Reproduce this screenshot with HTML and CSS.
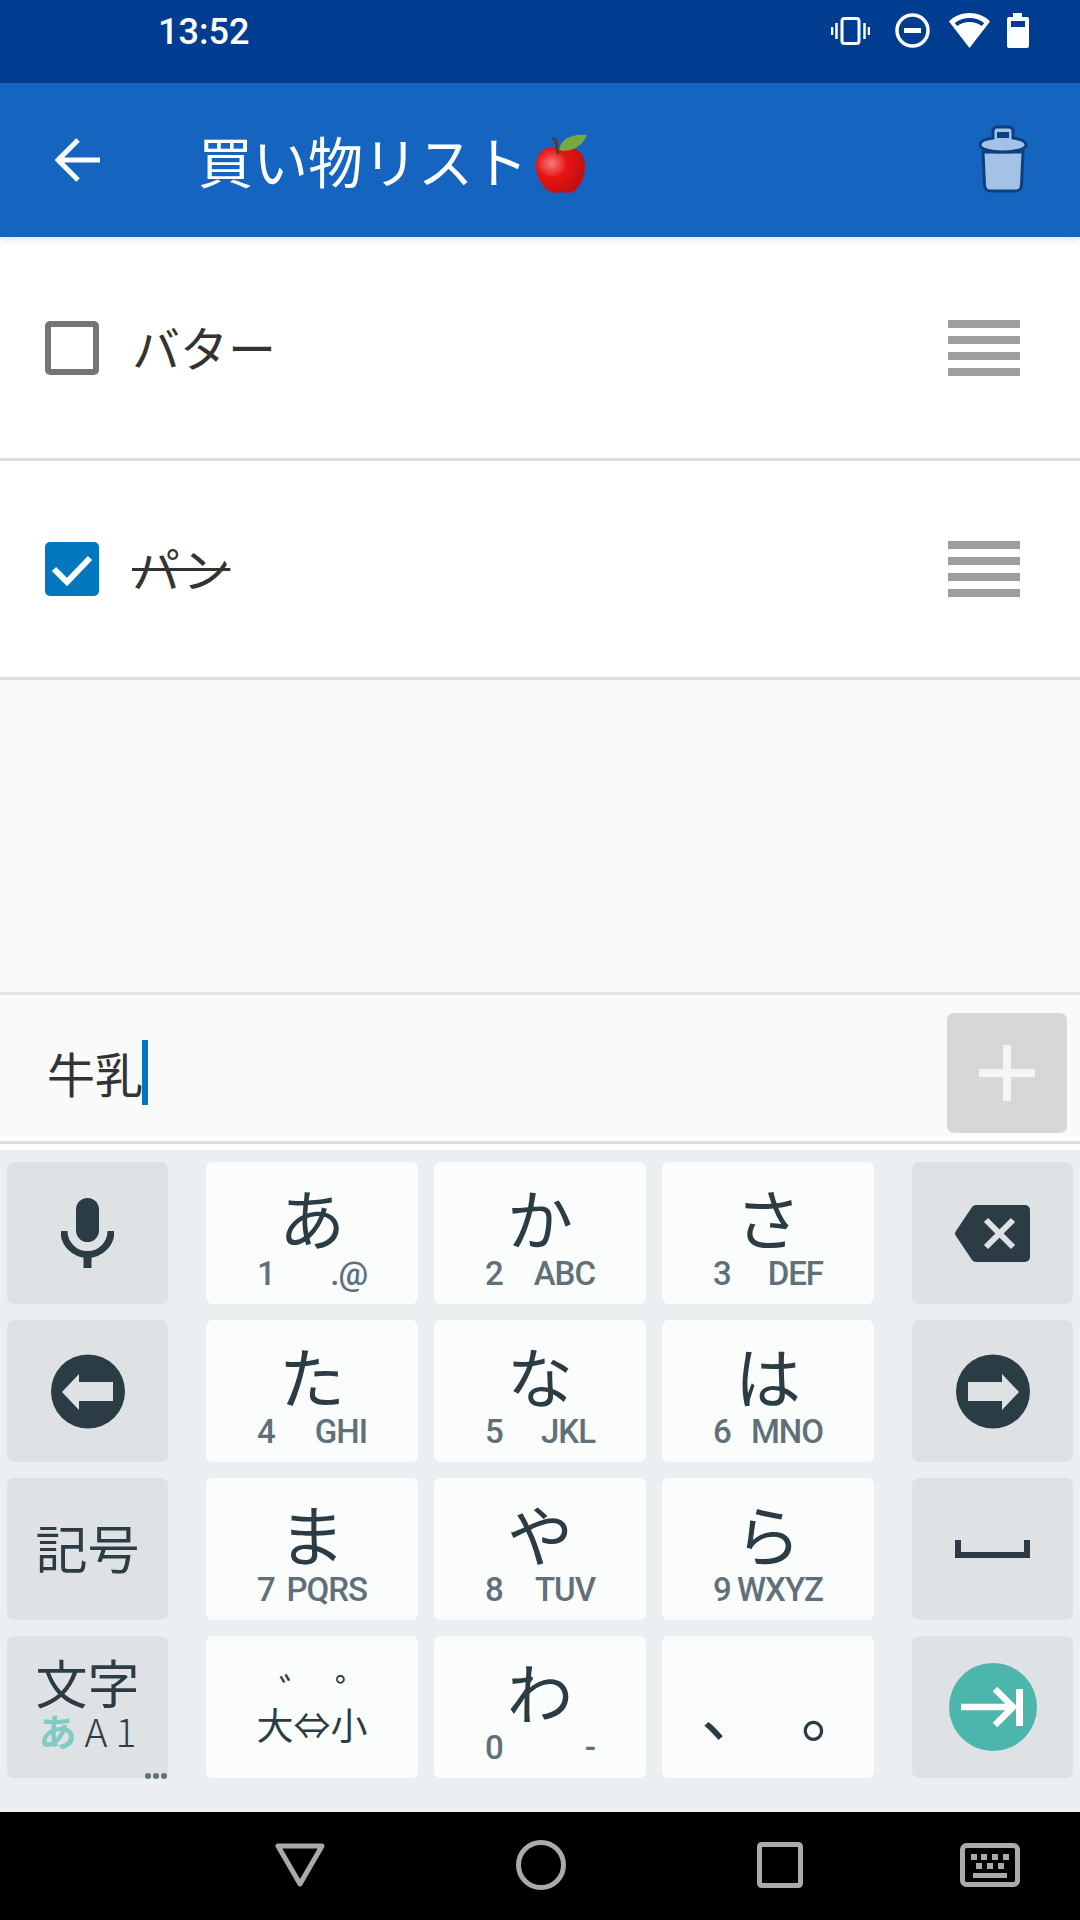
FILE: index.html
```html
<!DOCTYPE html>
<html lang="ja">
<head>
    <meta charset="UTF-8">
    <meta name="viewport" content="width=device-width, initial-scale=1.0">
    <title>買い物リスト</title>
    <link rel="stylesheet" href="styles.css">
</head>
<body>
    <div class="screen">
        <div class="status-bar">
            <span class="clock">13:52</span>
            <div class="status-icons">
                <svg width="39" height="28" viewBox="0 0 39 28"><rect x="11" y="1.500" width="17" height="25" rx="2.500" fill="none" stroke="#fff" stroke-width="3"/><path d="M5.500 6v16M1 10v8M33.500 6v16M38 10v8" stroke="#fff" stroke-width="2.500"/></svg>
                <svg width="35" height="35" viewBox="0 0 35 35"><circle cx="17.500" cy="17.500" r="15.500" fill="none" stroke="#fff" stroke-width="3.500"/><rect x="9" y="15" width="17" height="5" fill="#fff"/></svg>
                <svg width="41" height="35" viewBox="0 0 41 35"><path d="M0 8.500C5 3 12.500 0 20.500 0S36 3 41 8.500L20.500 35z" fill="#fff"/><path d="M7 11.500C11 8.500 15.500 7 20.500 7S30 8.500 34 11.500" fill="none" stroke="#003c8f" stroke-width="4"/></svg>
                <svg width="22" height="35" viewBox="0 0 22 35"><path d="M6 0h9v4h5a2 2 0 0 1 2 2v27a2 2 0 0 1-2 2H2a2 2 0 0 1-2-2V6a2 2 0 0 1 2-2h4z" fill="#fff"/><rect x="4" y="8" width="14" height="6" fill="#003c8f"/></svg>
            </div>
        </div>

        <div class="app-bar">
            <svg class="back-arrow" width="45" height="44" viewBox="0 0 45 44"><path d="M45 22H4M23 2L3 22l20 20" fill="none" stroke="#fff" stroke-width="5"/></svg>
            <h1 class="title">買い物リスト</h1>
            <svg class="apple" width="52" height="60" viewBox="0 0 52 60">
                <defs><radialGradient id="appleFill" cx="0.32" cy="0.35" r="0.7"><stop offset="0" stop-color="#f77a7a"/><stop offset="0.45" stop-color="#e81414"/><stop offset="1" stop-color="#c01010"/></radialGradient></defs>
                <path d="M18 15C8 13 0 20 0 33c0 14 10 27 20 27 3 0 4-1 6-1s3 1 6 1c9 0 17-13 17-27 0-13-9-20-18-18-5 1-8 1-13 0z" fill="url(#appleFill)"/>
                <path d="M22 21L20 8l-3-3" fill="none" stroke="#5d3a1a" stroke-width="3"/>
                <path d="M23 17C24 7 35 0 51 2 47 13 35 20 23 17z" fill="#76a843"/>
            </svg>
            <svg class="trash" width="50" height="68" viewBox="0 0 50 68">
                <path d="M5 27h40l-1.500 33c-.2 4-3 6-6 6h-25c-3 0-5.800-2-6-6z" fill="#a3c2e6" stroke="#0d3f80" stroke-width="3"/>
                <path d="M15 13V6a4 4 0 0 1 4-4h12a4 4 0 0 1 4 4v7c8 1 13 3 13 7s-10 7-23 7-23-3-23-7 5-6 13-7z" fill="#a3c2e6" stroke="#0d3f80" stroke-width="3"/>
                <rect x="19" y="7" width="12" height="6" fill="#0d3f80"/>
            </svg>
        </div>

        <div class="list">
            <div class="row">
                <span class="checkbox"></span>
                <span class="item-name">バター</span>
                <div class="handle"><i></i><i></i><i></i><i></i></div>
            </div>
            <div class="row">
                <span class="checkbox checked">
                    <svg width="54" height="54" viewBox="0 0 54 54"><path d="M9 27l13 13 23-24" fill="none" stroke="#fff" stroke-width="6"/></svg>
                </span>
                <span class="item-name done">パン</span>
                <div class="handle"><i></i><i></i><i></i><i></i></div>
            </div>
        </div>

        <div class="input-bar">
            <div class="input-text">牛乳<span class="cursor"></span></div>
            <div class="add-btn"><span class="plus"></span></div>
        </div>

        <div class="keyboard">
            <div class="key-col">
                <div class="key fn">
                    <svg width="53" height="70" viewBox="0 0 53 70"><rect x="15" y="0" width="23" height="44" rx="11.500" fill="#2b3c44"/><path d="M3 33a23.500 23.500 0 0 0 47 0" fill="none" stroke="#2b3c44" stroke-width="7"/><rect x="22.500" y="54" width="8" height="16" fill="#2b3c44"/></svg>
                </div>
                <div class="key fn">
                    <svg width="74" height="75" viewBox="0 0 74 75"><circle cx="37" cy="37.500" r="37" fill="#2b3c44"/><path d="M11 38l17-18v8h34v19H28v9z" fill="#dfe2e5"/></svg>
                </div>
                <div class="key fn fn-text">記号</div>
                <div class="key fn mode-key">
                    <span class="mode-main">文字</span>
                    <span class="mode-sub"><b>あ</b><span>A</span><span>1</span></span>
                    <span class="more-dots"><i></i><i></i><i></i></span>
                </div>
            </div>

            <div class="key-grid">
                <div class="key"><span class="kana">あ</span><span class="sub"><span>1</span><span>.@</span></span></div>
                <div class="key"><span class="kana">か</span><span class="sub"><span>2</span><span>ABC</span></span></div>
                <div class="key"><span class="kana">さ</span><span class="sub"><span>3</span><span>DEF</span></span></div>
                <div class="key"><span class="kana">た</span><span class="sub"><span>4</span><span>GHI</span></span></div>
                <div class="key"><span class="kana">な</span><span class="sub"><span>5</span><span>JKL</span></span></div>
                <div class="key"><span class="kana">は</span><span class="sub"><span>6</span><span>MNO</span></span></div>
                <div class="key"><span class="kana">ま</span><span class="sub"><span>7</span><span>PQRS</span></span></div>
                <div class="key"><span class="kana">や</span><span class="sub"><span>8</span><span>TUV</span></span></div>
                <div class="key"><span class="kana">ら</span><span class="sub"><span>9</span><span>WXYZ</span></span></div>
                <div class="key small-key">
                    <span class="marks"><span>゛</span><span>゜</span></span>
                    <span class="size-swap">大⇔小</span>
                </div>
                <div class="key"><span class="kana">わ</span><span class="sub"><span>0</span><span>-</span></span></div>
                <div class="key punct-key"><span>、</span><span>。</span></div>
            </div>

            <div class="key-col">
                <div class="key fn">
                    <svg width="75" height="57" viewBox="0 0 75 57"><path d="M21 0h49a5 5 0 0 1 5 5v47a5 5 0 0 1-5 5H21a5 5 0 0 1-4-2L1 31a4 4 0 0 1 0-5L17 2a5 5 0 0 1 4-2z" fill="#2b3c44"/><path d="M31 15l27 27M58 15L31 42" stroke="#dfe2e5" stroke-width="6"/></svg>
                </div>
                <div class="key fn">
                    <svg width="74" height="75" viewBox="0 0 74 75"><circle cx="37" cy="37.500" r="37" fill="#2b3c44"/><path d="M63 38L46 20v8H12v19h34v9z" fill="#dfe2e5"/></svg>
                </div>
                <div class="key fn">
                    <svg width="75" height="18" viewBox="0 0 75 18"><path d="M3 0v15h69V0" fill="none" stroke="#2b3c44" stroke-width="6"/></svg>
                </div>
                <div class="key fn">
                    <svg width="88" height="88" viewBox="0 0 88 88"><circle cx="44" cy="44" r="44" fill="#4db6ac"/><path d="M12 44h50M46 26l18 18-18 18" fill="none" stroke="#fff" stroke-width="6.500"/><rect x="67" y="26" width="7" height="37" fill="#fff"/></svg>
                </div>
            </div>
        </div>

        <div class="nav-bar">
            <svg width="50" height="44" viewBox="0 0 50 44"><path d="M3 3h44L25 41z" fill="none" stroke="#aaa" stroke-width="5" stroke-linejoin="round"/></svg>
            <svg width="50" height="50" viewBox="0 0 50 50"><circle cx="25" cy="25" r="22.500" fill="none" stroke="#aaa" stroke-width="5"/></svg>
            <svg width="46" height="46" viewBox="0 0 46 46"><rect x="2.500" y="2.500" width="41" height="41" rx="2" fill="none" stroke="#aaa" stroke-width="5"/></svg>
            <svg class="nav-keyboard" width="60" height="44" viewBox="0 0 60 44"><rect x="2.500" y="2.500" width="55" height="39" rx="4" fill="none" stroke="#aaa" stroke-width="5"/><path d="M11 11h6v6h-6zM21 11h6v6h-6zM32 11h6v6h-6zM43 11h6v6h-6zM16 20h6v6h-6zM27 20h6v6h-6zM38 20h6v6h-6zM13 30h34v5H13z" fill="#aaa"/></svg>
        </div>
    </div>
</body>
</html>
```

FILE: styles.css
```css
* { box-sizing: border-box; margin: 0; padding: 0; }
body {
    font-family: "Noto Sans CJK JP", "Noto Sans", sans-serif;
    background: #fafafa;
}
.screen {
    width: 1080px;
    height: 1920px;
    display: flex;
    flex-direction: column;
    overflow: hidden;
}

/* status bar */
.status-bar {
    height: 83px;
    flex-shrink: 0;
    background: #003c8f;
    display: flex;
    align-items: flex-start;
    justify-content: space-between;
    padding: 12px 51px 0 158px;
}
.clock {
    font-family: Roboto, sans-serif;
    font-weight: 500;
    font-size: 36px;
    line-height: 40px;
    color: #fff;
}
.status-icons {
    display: flex;
    align-items: center;
    gap: 19px;
    margin-top: 1px;
}
.status-icons svg:first-child { margin-right: 6px; }
.status-icons svg:last-child { margin-left: -2px; }

/* app bar */
.app-bar {
    height: 154px;
    flex-shrink: 0;
    background: #1565c0;
    display: flex;
    align-items: center;
    padding: 0 52px 0 55px;
    position: relative;
    z-index: 1;
    box-shadow: 0 2px 8px rgba(0,0,0,0.12);
}
.back-arrow { flex-shrink: 0; }
.title {
    margin: -2px 0 0 98px;
    font-size: 55px;
    font-weight: 400;
    color: #fff;
    line-height: 60px;
}
.apple { margin: 6px 0 0 8px; }
.trash { margin: -2px 0 0 auto; }

/* list */
.list { flex: 1; background: #fafafa; }
.row {
    height: 219px;
    background: #fff;
    border-bottom: 3px solid #dddddd;
    display: flex;
    align-items: center;
    padding: 0 60px 0 45px;
}
.row:first-child { height: 224px; }
.checkbox {
    width: 54px;
    height: 54px;
    flex-shrink: 0;
    border: 6px solid #757575;
    border-radius: 5px;
}
.checkbox.checked {
    border: none;
    background: #0277bd;
}
.checkbox svg { display: block; }
.item-name {
    margin: 0 0 4px 33px;
    font-size: 48px;
    line-height: 60px;
    color: #333;
}
.item-name.done { text-decoration: line-through; text-decoration-thickness: 3px; }
.handle {
    margin-left: auto;
    width: 72px;
    display: flex;
    flex-direction: column;
    gap: 8px;
}
.handle i { display: block; height: 8px; background: #9e9e9e; }

/* input */
.input-bar {
    height: 158px;
    flex-shrink: 0;
    background: linear-gradient(#fafafa 142px, #fff 142px);
    border-top: 3px solid #e5e5e5;
    display: flex;
    padding: 18px 13px 0 47px;
    position: relative;
}
.input-text {
    flex: 1;
    font-size: 48px;
    line-height: 65px;
    margin-top: 27px;
    color: #333;
    display: flex;
    align-items: center;
    height: 65px;
}
.cursor {
    display: inline-block;
    width: 6px;
    height: 65px;
    margin-left: -1px;
    background: #0277bd;
}
.add-btn {
    width: 120px;
    height: 120px;
    border-radius: 7px;
    background: #d6d7d7;
    display: flex;
    align-items: center;
    justify-content: center;
}
.plus {
    display: block;
    width: 56px;
    height: 56px;
    background:
        linear-gradient(#f5f5f5, #f5f5f5) center / 8px 56px no-repeat,
        linear-gradient(#f5f5f5, #f5f5f5) center / 56px 8px no-repeat;
}
.input-bar::after {
    content: "";
    position: absolute;
    left: 0;
    right: 0;
    bottom: 6px;
    height: 3px;
    background: #dddddd;
}

/* keyboard */
.keyboard {
    height: 662px;
    flex-shrink: 0;
    background: #eceff1;
    display: flex;
    justify-content: space-between;
    padding: 12px 7px 0;
    color: #2b3c44;
}
.key-col {
    width: 161px;
    display: grid;
    grid-template-rows: repeat(4, 142px);
    row-gap: 16px;
}
.key-grid {
    width: 668px;
    display: grid;
    grid-template-columns: repeat(3, 212px);
    grid-template-rows: repeat(4, 142px);
    gap: 16px;
}
.key {
    background: #fbfdfc;
    border-radius: 7px;
    display: flex;
    flex-direction: column;
    align-items: center;
    padding-top: 24px;
}
.key.fn {
    background: #dfe2e5;
    padding-top: 0;
    justify-content: center;
}
.kana {
    font-size: 66px;
    line-height: 60px;
}
.sub {
    width: 100%;
    margin-top: 12px;
    padding: 0 51px;
    display: flex;
    justify-content: space-between;
    font-family: Roboto, sans-serif;
    font-weight: 500;
    font-size: 33px;
    letter-spacing: -1px;
    line-height: 32px;
    color: #60707a;
}
.fn-text { font-size: 52px; line-height: 60px; padding-bottom: 4px; }
.mode-key { position: relative; }
.mode-main { font-size: 52px; line-height: 52px; margin-top: -10px; }
.mode-sub {
    display: flex;
    align-items: center;
    gap: 8px;
    font-size: 39px;
    line-height: 36px;
    font-weight: 300;
    margin-top: 4px;
}
.mode-sub b { font-size: 38px; font-weight: 700; color: #80cbc4; }
.more-dots {
    position: absolute;
    right: 1px;
    bottom: -1px;
    display: flex;
    gap: 2px;
}
.more-dots i {
    display: block;
    width: 6px;
    height: 6px;
    border-radius: 50%;
    background: #60707a;
}
.small-key { padding-top: 34px; }
.marks {
    display: flex;
    gap: 18px;
    padding-left: 28px;
    font-size: 38px;
    line-height: 40px;
}
.size-swap {
    font-size: 37px;
    line-height: 40px;
    margin-top: -6px;
}
.punct-key {
    flex-direction: row;
    justify-content: center;
    gap: 36px;
    font-size: 64px;
    line-height: 60px;
    padding: 1px 0 0 30px;
}

/* nav bar */
.nav-bar {
    height: 108px;
    flex-shrink: 0;
    background: #000;
    display: flex;
    align-items: center;
    gap: 191px;
    padding: 0 0 2px 275px;
}
.nav-keyboard { margin-left: -34px; }
```
